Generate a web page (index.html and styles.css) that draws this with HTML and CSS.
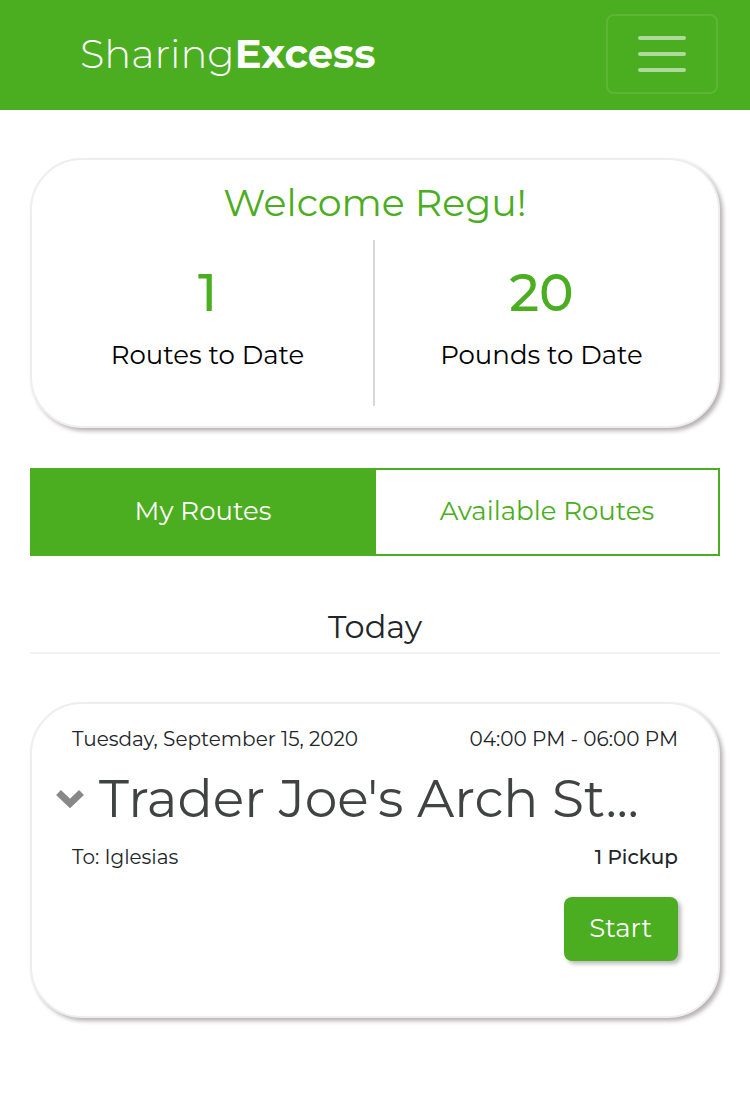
FILE: index.html
```html
<!DOCTYPE html>
<html lang="en">
<head>
<meta charset="utf-8">
<meta name="viewport" content="width=device-width, initial-scale=1">
<title>Sharing Excess</title>
<link rel="stylesheet" href="styles.css">
</head>
<body>
<header class="navbar">
  <a class="brand" href="#">Sharing<strong>Excess</strong></a>
  <button class="menu-toggle" type="button" aria-label="Open menu">
    <svg class="menu-icon" viewBox="0 0 60 60" aria-hidden="true"><path d="M8 14H52M8 30H52M8 46H52" fill="none" stroke="#fff" stroke-opacity=".55" stroke-width="4" stroke-linecap="round"/></svg>
  </button>
</header>
<main class="content">
  <section class="card summary">
    <h1 class="welcome">Welcome Regu!</h1>
    <div class="stats">
      <div class="stat"><span class="stat-value">1</span><span class="stat-label">Routes to Date</span></div>
      <div class="stat"><span class="stat-value">20</span><span class="stat-label">Pounds to Date</span></div>
    </div>
  </section>
  <div class="tabs" role="tablist">
    <button class="tab tab-active" type="button" role="tab" aria-selected="true">My Routes</button>
    <button class="tab" type="button" role="tab" aria-selected="false">Available Routes</button>
  </div>
  <h2 class="day">Today</h2>
  <article class="card route">
    <div class="row"><span>Tuesday, September 15, 2020</span><span>04:00 PM - 06:00 PM</span></div>
    <div class="route-heading">
      <button class="expand" type="button" aria-label="Show details">
        <svg class="chevron" viewBox="0 0 28 20" aria-hidden="true"><path d="M2.500 3.500L14 14.500L25.500 3.500" fill="none" stroke="#888" stroke-width="7"/></svg>
      </button>
      <h3 class="route-name">Trader Joe's Arch St...</h3>
    </div>
    <div class="row"><span>To: Iglesias</span><span class="pickups">1 Pickup</span></div>
    <div class="actions"><button class="start" type="button">Start</button></div>
  </article>
</main>
</body>
</html>
```
FILE: styles.css
```css
* { box-sizing: border-box; }
body {
  margin: 0;
  background: #fff;
  color: #212529;
  font-family: Montserrat, Inter, "Open Sans", sans-serif;
  font-weight: 400;
}
button { font: inherit; cursor: pointer; }
h1, h2, h3 { margin: 0; font-weight: 400; }
.navbar {
  display: flex;
  align-items: center;
  justify-content: space-between;
  padding: 14px 32px 16px 80px;
  background: #4bad20;
}
.brand {
  color: #fff;
  font-size: 40px;
  font-weight: 300;
  line-height: 60px;
  text-decoration: none;
}
.brand strong { font-weight: 700; }
.menu-toggle {
  display: flex;
  padding: 8px 24px;
  background: none;
  border: 2px solid rgba(255, 255, 255, .1);
  border-radius: 8px;
}
.menu-icon { width: 60px; height: 60px; }
.content { padding: 48px 30px; }
.card {
  background: #fff;
  border: 2px solid #eee;
  border-radius: 52px;
  box-shadow: 3px 3px 4px #b8b2b4;
}
.summary { padding: 20px 0; text-align: center; }
.welcome {
  color: #4bad20;
  font-size: 38px;
  line-height: 46px;
}
.stats {
  display: grid;
  grid-template-columns: 1fr 1fr;
  margin-top: 14px;
}
.stat {
  display: flex;
  flex-direction: column;
  gap: 12px;
  padding: 19px 12px 35px;
}
.stat:first-child { padding-left: 22px; border-right: 2px solid #d8d8d8; }
.stat:last-child { padding-right: 22px; }
.stat-value {
  color: #4bad20;
  font-size: 52px;
  font-weight: 500;
  line-height: 68px;
}
.stat-label {
  color: #000;
  font-size: 26px;
  line-height: 32px;
}
.tabs {
  display: flex;
  margin-top: 40px;
  border: 2px solid #4bad20;
}
.tab {
  flex: 1;
  padding: 21px 0 23px;
  border: 0;
  background: #fff;
  color: #4bad20;
  font-size: 26px;
  line-height: 40px;
}
.tab + .tab { border-left: 2px solid #4bad20; }
.tab-active { background: #4bad20; color: #fff; }
.day {
  margin: 48px 0;
  padding-bottom: 2px;
  border-bottom: 2px solid #f3f3f6;
  font-size: 32px;
  line-height: 46px;
  text-align: center;
}
.route { padding: 20px 40px 55px; }
.row {
  display: flex;
  justify-content: space-between;
  font-size: 20px;
  line-height: 30px;
}
.pickups { font-weight: 500; }
.route-heading {
  display: flex;
  align-items: center;
  gap: 15px;
  margin: 13px 0 11px -16px;
}
.expand {
  display: flex;
  padding: 0;
  border: 0;
  background: none;
}
.chevron { width: 28px; height: 20px; }
.route-name {
  color: #404342;
  font-size: 52px;
  line-height: 64px;
}
.actions { display: flex; justify-content: flex-end; margin-top: 25px; }
.start {
  padding: 11px 26px 13px 25px;
  border: 0;
  border-radius: 8px;
  background: #4bad20;
  box-shadow: 3px 3px 4px #bbb;
  color: #fff;
  font-size: 26px;
  line-height: 40px;
}
```
